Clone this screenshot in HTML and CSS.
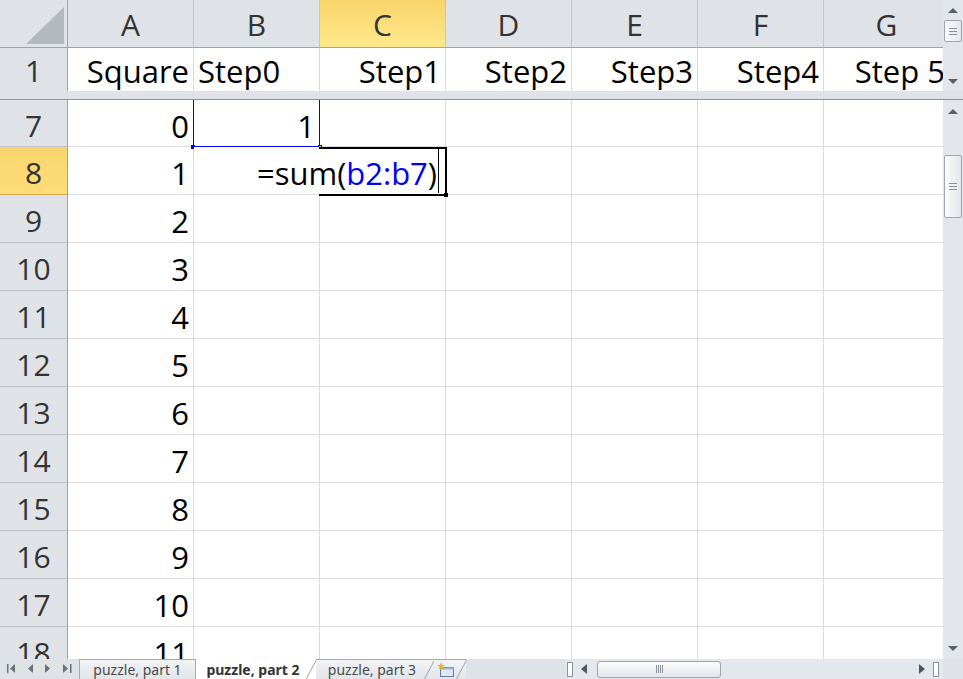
FILE: index.html
```html
<!DOCTYPE html>
<html>
<head>
    <title>puzzle, part 2 - Excel</title>
    <link rel="stylesheet" href="styles.css">
</head>
<body>
<div class="app">
    <div class="pane pane-top">
        <div class="grid grid-top">
            <div class="corner"><svg width="38" height="37" viewBox="0 0 38 37"><polygon points="38,0 38,37 0,37" fill="#b4b9bf"/></svg></div>
            <div class="head">A</div><div class="head">B</div><div class="head sel">C</div><div class="head">D</div><div class="head">E</div><div class="head">F</div><div class="head">G</div>
            <div class="rh first">1</div>
            <div class="c first r">Square</div><div class="c first">Step0</div><div class="c first r">Step1</div><div class="c first r">Step2</div><div class="c first r">Step3</div><div class="c first r">Step4</div><div class="c first r">Step 5</div>
        </div>
        <div class="vscroll">
            <div class="vbtn"><span class="tri-up"></span></div>
            <div class="vthumb small"><span class="grip"></span></div>
            <div class="vtrack"></div>
            <div class="vbtn"><span class="tri-down"></span></div>
        </div>
    </div>

    <div class="split"></div>

    <div class="pane pane-main">
        <div class="grid grid-main">
            <div class="rh">7</div><div class="c r">0</div><div class="c r">1</div><div class="c"></div><div class="c"></div><div class="c"></div><div class="c"></div><div class="c"></div>
            <div class="rh sel">8</div><div class="c r">1</div><div class="c"></div><div class="c"></div><div class="c"></div><div class="c"></div><div class="c"></div><div class="c"></div>
            <div class="rh">9</div><div class="c r">2</div><div class="c"></div><div class="c"></div><div class="c"></div><div class="c"></div><div class="c"></div><div class="c"></div>
            <div class="rh">10</div><div class="c r">3</div><div class="c"></div><div class="c"></div><div class="c"></div><div class="c"></div><div class="c"></div><div class="c"></div>
            <div class="rh">11</div><div class="c r">4</div><div class="c"></div><div class="c"></div><div class="c"></div><div class="c"></div><div class="c"></div><div class="c"></div>
            <div class="rh">12</div><div class="c r">5</div><div class="c"></div><div class="c"></div><div class="c"></div><div class="c"></div><div class="c"></div><div class="c"></div>
            <div class="rh">13</div><div class="c r">6</div><div class="c"></div><div class="c"></div><div class="c"></div><div class="c"></div><div class="c"></div><div class="c"></div>
            <div class="rh">14</div><div class="c r">7</div><div class="c"></div><div class="c"></div><div class="c"></div><div class="c"></div><div class="c"></div><div class="c"></div>
            <div class="rh">15</div><div class="c r">8</div><div class="c"></div><div class="c"></div><div class="c"></div><div class="c"></div><div class="c"></div><div class="c"></div>
            <div class="rh">16</div><div class="c r">9</div><div class="c"></div><div class="c"></div><div class="c"></div><div class="c"></div><div class="c"></div><div class="c"></div>
            <div class="rh">17</div><div class="c r">10</div><div class="c"></div><div class="c"></div><div class="c"></div><div class="c"></div><div class="c"></div><div class="c"></div>
            <div class="rh">18</div><div class="c r">11</div><div class="c"></div><div class="c"></div><div class="c"></div><div class="c"></div><div class="c"></div><div class="c"></div>

            <!-- formula range b2:b7 -->
            <div class="range"><span class="handle hl"></span><span class="handle hr"></span></div>
            <!-- cell being edited -->
            <div class="editor">=sum(<span class="ref">b2:b7</span>)<span class="caret"></span></div>
            <div class="editbox"></div>
        </div>
        <div class="vscroll">
            <div class="vbtn tall"><span class="tri-up"></span></div>
            <div class="vthumb big"><span class="grip"></span></div>
            <div class="vtrack"></div>
            <div class="vbtn tall"><span class="tri-down"></span></div>
        </div>
    </div>

    <div class="tabbar">
        <div class="nav">
            <svg width="78" height="20" viewBox="0 0 78 20">
                <rect x="7" y="5" width="1.5" height="9" fill="#6b7179"/>
                <polygon points="15,5 15,14 10,9.5" fill="#6b7179"/>
                <polygon points="33,5 33,14 28,9.5" fill="#6b7179"/>
                <polygon points="45,5 45,14 50,9.5" fill="#6b7179"/>
                <polygon points="63,5 63,14 68,9.5" fill="#6b7179"/>
                <rect x="70" y="5" width="1.5" height="9" fill="#6b7179"/>
            </svg>
        </div>
        <div class="tab t1">puzzle, part 1</div>
        <div class="tab active slant">puzzle, part 2</div>
        <div class="tab t3 slant">puzzle, part 3</div>
        <div class="tab newtab slant">
            <svg width="20" height="16" viewBox="0 0 20 16">
                <rect x="4.5" y="5.5" width="13" height="9" fill="#dfe9f5" stroke="#5f7fa6"/>
                <rect x="4.5" y="5.5" width="13" height="2" fill="#9fb7d3"/>
                <polygon points="5,0 6,3 9,3 6.5,5 7.5,8 5,6 2.5,8 3.5,5 1,3 4,3" fill="#f5b324"/>
            </svg>
        </div>
        <div class="hscroll">
            <span class="split-handle"></span>
            <div class="hbtn"><span class="tri-left"></span></div>
            <div class="hthumb"><span class="hgrip"></span></div>
            <div class="htrack"></div>
            <div class="hbtn"><span class="tri-right"></span></div>
            <span class="split-handle end"></span>
        </div>
        <div class="sb-corner"></div>
    </div>
</div>
</body>
</html>
```

FILE: styles.css
```css
body { margin: 0; font-family: "Open Sans", "Noto Sans", sans-serif; background: #fff; }
.app { width: 963px; height: 679px; display: flex; flex-direction: column; overflow: hidden; }

/* panes */
.pane { display: flex; }
.pane-top { height: 91px; overflow: hidden; }
.pane-main { height: 559px; overflow: hidden; }
.split { height: 9px; background: #dfe2e8; border-bottom: 1px solid #8e939a; box-sizing: border-box; }

/* sheet grid */
.grid { flex: 1; display: grid; grid-template-columns: 68px repeat(7, 126px); overflow: hidden; position: relative; }
.grid-top { grid-template-rows: 48px 48px; }
.grid-main { grid-template-rows: 47px repeat(11, 48px); }
.grid > div { box-sizing: border-box; }

.corner { background: #dfe3e8; border-right: 1px solid #9ea3aa; border-bottom: 1px solid #9ea3aa; display: flex; align-items: flex-end; justify-content: flex-end; padding: 0 3px 3px 0; }
.head { background: #dfe3e8; color: #333; font-size: 30px; text-align: center; padding-top: 4px; line-height: 42px; border-right: 1px solid #c2c6cc; border-bottom: 1px solid #9ea3aa; }
.head.sel { background: linear-gradient(#f9d46a, #fde98c); border-bottom-color: #c8a24a; }
.rh { background: #dfe3e8; color: #333; font-size: 30px; text-align: center; padding-top: 5px; line-height: 42px; border-right: 1px solid #9ea3aa; border-bottom: 1px solid #c2c6cc; }
.rh.sel { background: linear-gradient(#f9d46c, #fddd78); border-bottom-color: #d1ab55; }
.rh.first { padding-top: 2px; }

.c { border-right: 1px solid #dadcdf; border-bottom: 1px solid #dadcdf; font-size: 31px; color: #000; padding: 5px 4px 0; line-height: 42px; white-space: nowrap; }
.c.first { padding-top: 2px; }
.c.r { text-align: right; }

/* formula range and edit box */
.range { position: absolute; left: 193px; top: 0; width: 127px; height: 47px; border: 1px solid #0000ff; border-top: none; box-sizing: border-box; }
.handle { position: absolute; bottom: -3px; width: 4px; height: 4px; background: #0000ff; }
.handle.hl { left: -3px; }
.handle.hr { right: -3px; background: #e6d23c; border: 1px solid #0000ff; width: 2px; height: 2px; }
.editor { position: absolute; left: 194px; top: 47px; width: 250px; height: 47px; box-sizing: border-box; background: #fff; text-align: right; font-size: 31px; line-height: 42px; padding: 5px 7px 0 0; white-space: nowrap; }
.ref { color: #0000ff; }
.caret { position: absolute; right: 5px; top: 1px; bottom: 1px; width: 1px; background: #000; }
.editbox { position: absolute; left: 319px; top: 47px; width: 128px; height: 49px; border: 2px solid #000; border-left: none; box-sizing: border-box; }
.editbox::after { content: ""; position: absolute; right: -3px; bottom: -3px; width: 4px; height: 4px; background: #000; }

/* vertical scrollbars */
.vscroll { width: 20px; background: #e2e5ea; display: flex; flex-direction: column; align-items: center; }
.vbtn { height: 20px; width: 100%; display: flex; align-items: center; justify-content: center; }
.vbtn.tall { height: 22px; }
.vtrack { flex: 1; }
.vthumb { width: 18px; box-sizing: border-box; border: 1px solid #a0a6ad; border-radius: 2px; background: linear-gradient(90deg, #fcfcfd, #e3e6ea); display: flex; align-items: center; justify-content: center; }
.vthumb.small { height: 22px; }
.vthumb.big { height: 63px; margin-top: 33px; }
.grip { width: 8px; height: 7px; background: repeating-linear-gradient(#8a9098 0 1px, transparent 1px 3px); }

.tri-up { border-left: 5px solid transparent; border-right: 5px solid transparent; border-bottom: 5px solid #596068; }
.tri-down { border-left: 5px solid transparent; border-right: 5px solid transparent; border-top: 5px solid #596068; }
.tri-left { border-top: 5px solid transparent; border-bottom: 5px solid transparent; border-right: 6px solid #4f565e; }
.tri-right { border-top: 5px solid transparent; border-bottom: 5px solid transparent; border-left: 6px solid #4f565e; }

/* sheet tabs */
.tabbar { height: 20px; display: flex; background: #dfe3e8; font-family: "Noto Sans", "Open Sans", sans-serif; font-size: 14px; color: #4a4a4a; }
.nav { width: 79px; height: 20px; }
.tab { position: relative; height: 20px; box-sizing: border-box; display: flex; align-items: center; justify-content: center; background: linear-gradient(#f1f3f5, #e2e5e9); border-top: 1px solid #a3aab2; }
.tab.t1 { width: 117px; border-left: 1px solid #a3aab2; border-right: 1px solid #a3aab2; }
.tab.active { width: 120px; background: #fff; border-top: none; font-weight: bold; color: #333; padding-right: 6px; }
.tab.t3 { width: 118px; padding-right: 6px; }
.tab.newtab { width: 32px; padding-right: 8px; }
.tab.slant::after { content: ""; position: absolute; right: 4px; top: 0; bottom: 0; width: 1px; background: #9ca3ab; transform: skewX(-28deg); }

/* horizontal scrollbar */
.hscroll { margin-left: auto; width: 378px; display: flex; align-items: center; background: #e4e7eb; }
.split-handle { width: 6px; height: 15px; box-sizing: border-box; border: 1px solid #8c929a; background: #fff; margin: 0 2px; }
.split-handle.end { margin: 0 4px 0 2px; }
.hbtn { width: 18px; height: 20px; display: flex; align-items: center; justify-content: center; }
.hthumb { width: 124px; height: 17px; margin-left: 4px; box-sizing: border-box; border: 1px solid #9ea4ab; border-radius: 3px; background: linear-gradient(#fbfbfc, #e3e6ea); display: flex; align-items: center; justify-content: center; }
.hgrip { width: 7px; height: 8px; background: repeating-linear-gradient(90deg, #8a9098 0 1px, transparent 1px 2px); }
.htrack { flex: 1; }
.sb-corner { width: 20px; background: #dfe3e8; }
```
